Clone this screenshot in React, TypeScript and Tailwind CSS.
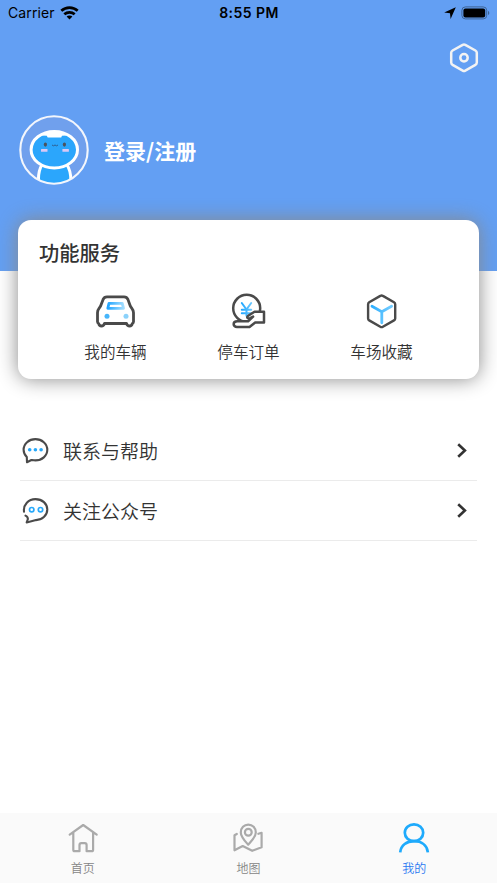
import React from 'react';

interface ServiceItem {
  label: string;
  icon: React.ReactNode;
}

const HexagonSettingIcon = () => (
  <svg width="30" height="32" viewBox="0 0 30 32" fill="none" stroke="#f3f3f3">
    <path d="M13.7 2.8 3.600 8.500Q2.200 9.300 2.200 10.800v9.800q0 1.500 1.400 2.300l10.100 5.700q1.300.7 2.600 0l10.100-5.700q1.400-.8 1.400-2.300v-9.800q0-1.500-1.400-2.300L16.300 2.800q-1.300-.7-2.600 0Z" strokeWidth="2.500" />
    <circle cx="15" cy="15.700" r="3.700" strokeWidth="2.500" />
  </svg>
);

const Avatar = () => (
  <svg width="70" height="70" viewBox="0 0 70 70" fill="none">
    <clipPath id="avatar-clip">
      <circle cx="35" cy="35" r="34" />
    </clipPath>
    <circle cx="35" cy="35" r="33.7" fill="#70a0ed" />
    <g clipPath="url(#avatar-clip)">
      <path d="M20.2 74c-1.800-12 .3-20.500 3-24.500h24.500c3.500 5 5 14 3.500 24.500Z" fill="#2ba6fc" stroke="#fff" strokeWidth="3" />
      <ellipse cx="35.300" cy="34.700" rx="23.200" ry="18.300" fill="#2ba6fc" stroke="#fff" strokeWidth="3" />
      <path d="M22.500 20.500 28 16.500h14.500l5.500 4-5 .2-.8 1.700H28.700l-.9-1.700Z" fill="#fff" />
    </g>
    <ellipse cx="26.400" cy="29.600" rx="1.600" ry="2.100" fill="#4c535e" />
    <ellipse cx="45.400" cy="29.600" rx="1.600" ry="2.100" fill="#4c535e" />
    <path d="M33 30q1.500 1.600 3 0 1.500 1.600 3 0" stroke="#2f5f90" strokeWidth="1" />
    <rect x="22" y="34" width="6.500" height="2.700" rx=".5" fill="#d9c8f5" />
    <rect x="43.400" y="34" width="6.500" height="2.700" rx=".5" fill="#d9c8f5" />
    <circle cx="35" cy="35" r="33.700" stroke="#f3f6fc" strokeWidth="2.100" />
  </svg>
);

const CarIcon = () => (
  <svg width="40" height="40" viewBox="1.500 0 40 40" fill="none">
    <defs>
      <linearGradient id="car-window" x1="0" x2="1">
        <stop stopColor="#22a5ff" />
        <stop offset="1" stopColor="#a2ddff" />
      </linearGradient>
    </defs>
    <path
      d="M12.500 5.900h17c2 0 3.200.8 3.900 2.500l2.300 6.400c.3.900.8 1.400 1.500 2.300 1.200 1.500 1.800 2.800 1.800 4.600v9.100c0 1-.6 1.500-1.300 1.900-.2 1.300-1.300 2.300-2.700 2.300-1.500 0-2.500-.9-3-2.500H10c-.5 1.600-1.500 2.500-3 2.500-1.400 0-2.500-1-2.700-2.300-.8-.4-1.300-.9-1.300-1.900v-9.100c0-1.800.5-3.100 1.700-4.600.7-.9 1.200-1.400 1.500-2.300l2.400-6.400c.7-1.700 1.900-2.500 3.900-2.500Z"
      stroke="#4a4a4a"
      strokeWidth="2.800"
      strokeLinejoin="round"
    />
    <path d="M14.500 12.300h13.300l1.200 5H13.300Z" stroke="url(#car-window)" strokeWidth="2.800" strokeLinejoin="round" />
    <circle cx="12.500" cy="25.200" r="2.500" fill="#46b5fb" />
    <circle cx="31.500" cy="25.200" r="2.500" fill="#8bd2fb" />
  </svg>
);

const PayIcon = () => (
  <svg width="40" height="40" viewBox="1 0 40 40" fill="none" strokeLinecap="round" strokeLinejoin="round">
    <defs>
      <linearGradient id="yuan" gradientUnits="userSpaceOnUse" x1="13" x2="24" y1="0" y2="0">
        <stop stopColor="#1ca5ff" />
        <stop offset="1" stopColor="#70c9ff" />
      </linearGradient>
    </defs>
    <circle cx="18.700" cy="17.300" r="13.500" stroke="#4a4a4a" strokeWidth="2.500" />
    <path d="m13.800 12 4.700 6.500 4.700-6.500M13.800 18.800h9.400M13.800 22.300h9.400M18.500 18.500v6.200" stroke="url(#yuan)" strokeWidth="2" />
    <path
      d="M36 20.800H26.500l-6.300 4c-1 .7-1.300 1.700-.5 2.300.6.500 1.500.4 2.400 0l3-1.500-5 4.700H9.300c-4.900 0-4.700 5.600-.3 5.600h12.500l5.700-4.400H36Z"
      fill="#fff"
      stroke="#4a4a4a"
      strokeWidth="2.500"
    />
  </svg>
);

const CubeIcon = () => (
  <svg width="40" height="40" viewBox="0 0 40 40" fill="none">
    <defs>
      <linearGradient id="cube-line" gradientUnits="userSpaceOnUse" x1="10" x2="30" y1="15" y2="20">
        <stop stopColor="#2caeff" />
        <stop offset="1" stopColor="#77ceff" />
      </linearGradient>
    </defs>
    <path d="M18.300 4.900 7.200 11.200q-1.100.7-1.100 2v14.200q0 1.300 1.100 2l11.100 6.300q1.300.8 2.600 0L32 29.400q1.200-.7 1.200-2V13.200q0-1.300-1.200-2L20.900 4.900q-1.300-.8-2.600 0Z" stroke="#4a4a4a" strokeWidth="2.400" />
    <path d="m10 15.300 9.800 5.400 9.800-5.400M19.800 20.700v11.100" stroke="url(#cube-line)" strokeWidth="2.800" strokeLinecap="round" strokeLinejoin="round" />
  </svg>
);

const HelpIcon = () => (
  <svg width="28" height="28" viewBox="0.500 0.200 28 28" fill="none">
    <path d="M5.300 20.300C3.200 18.200 2.100 15.700 2.100 13 2.100 6.900 7.400 2.300 13.900 2.300S25.800 6.900 25.800 13 20.500 23.600 13.900 23.600c-1.400 0-2.600-.2-4-.4L5.500 25.400Z" stroke="#4a4a4a" strokeWidth="2.100" strokeLinejoin="round" />
    <circle cx="8.200" cy="12.900" r="1.800" fill="#28a9fa" />
    <circle cx="13.900" cy="12.900" r="1.800" fill="#28a9fa" />
    <circle cx="19.600" cy="12.900" r="1.800" fill="#28a9fa" />
  </svg>
);

const FollowIcon = () => (
  <svg width="28" height="28" viewBox="0.500 0.200 28 28" fill="none">
    <path d="M2.500 14.800C1.700 7.800 7 2.300 13.900 2.300S25.800 6.900 25.800 12.800 20.500 23.300 14.500 23.300L5.200 25.600l1.200-3.400c0-1.600-1.300-2.900-2.400-3.400" stroke="#4a4a4a" strokeWidth="2.100" strokeLinecap="round" strokeLinejoin="round" />
    <circle cx="10.200" cy="12.900" r="2.200" stroke="#28a9fa" strokeWidth="1.700" />
    <circle cx="19" cy="12.900" r="2.200" stroke="#28a9fa" strokeWidth="1.700" />
  </svg>
);

const ArrowIcon = () => (
  <svg width="12" height="16" viewBox="0 0.500 12 16" fill="none">
    <path d="m2.200 1.700 6.700 6.300-6.700 6.300" stroke="#333" strokeWidth="2.600" />
  </svg>
);

const HomeIcon = () => (
  <svg width="32" height="32" viewBox="0 0.300 32 32" fill="none" stroke="#aaa" strokeWidth="2.200" strokeLinecap="round" strokeLinejoin="round">
    <path d="M2.700 13 16.200 3.300 29.700 13M6.300 11v17q0 1.500 1.500 1.500h4.700v-6.300q0-1.800 1.800-1.800h3.500q1.800 0 1.800 1.800v6.300h5q1.500 0 1.500-1.500V11" />
  </svg>
);

const MapIcon = () => (
  <svg width="32" height="32" viewBox="0 0.500 32 32" fill="none" stroke="#aaa" strokeWidth="2.200" strokeLinecap="round" strokeLinejoin="round">
    <path d="M4.800 12.500 2.500 13.800v15l8.200-4.300 9.500 4.800 9.400-3.600V11.300l-3.200 1" />
    <path d="M16.200 23.200c-3.400-3.900-7.400-8-7.400-12.300 0-4.400 3.300-7.800 7.500-7.800s7.500 3.400 7.500 7.800c0 4.300-4.200 8.400-7.600 12.300Z" />
    <circle cx="16.300" cy="10.700" r="3.400" />
  </svg>
);

const MineIcon = () => (
  <svg width="32" height="32" viewBox="0 0.700 32 32" fill="none" stroke="#1eaafc" strokeWidth="2.700">
    <ellipse cx="16" cy="11.500" rx="9.200" ry="8.400" />
    <path d="M2.200 31C3 23.700 8.800 19.900 16 19.900S29 23.700 29.900 31" />
  </svg>
);

const StatusBar = () => (
  <div className="grid h-6 grid-cols-3 items-center pl-2 pr-[7px] pt-px font-['Inter','Liberation_Sans',sans-serif] text-[14px] text-black">
    <div className="flex items-center gap-[5px]">
      <span className="tracking-[0.12px]">Carrier</span>
      <svg width="19" height="14" viewBox="0 0 19 14" fill="none" stroke="#000" strokeWidth="2.700">
        <path d="M1.300 4.700c4.600-4.200 11.800-4.200 16.400 0M4.300 8.300c3-2.700 7.400-2.700 10.400 0" />
        <path d="m9.500 13.500-2.900-2.900c1.600-1.400 4.200-1.400 5.800 0Z" fill="#000" stroke="none" />
      </svg>
    </div>
    <span className="text-center font-semibold tracking-[0.45px]">8:55 PM</span>
    <div className="flex items-center justify-end gap-[5px]">
      <svg width="12" height="12" viewBox="0 0 12 12">
        <path d="M11.800.3 6.600 12 6 6.300.2 5.600Z" />
      </svg>
      <svg width="29" height="14" viewBox="0 0 29 14" fill="none">
        <rect x=".9" y=".9" width="24.800" height="12" rx="3.500" stroke="#3e6495" />
        <rect x="2.400" y="2.400" width="21.800" height="9" rx="2" fill="#000" />
        <path d="M27 4.700c1.800.7 1.800 3.700 0 4.400Z" fill="#3e6495" />
      </svg>
    </div>
  </div>
);

const services: ServiceItem[] = [
  { label: '我的车辆', icon: <CarIcon /> },
  { label: '停车订单', icon: <PayIcon /> },
  { label: '车场收藏', icon: <CubeIcon /> }
];

const menus: ServiceItem[] = [
  { label: '联系与帮助', icon: <HelpIcon /> },
  { label: '关注公众号', icon: <FollowIcon /> }
];

const tabs = [
  { label: '首页', icon: <HomeIcon />, active: false },
  { label: '地图', icon: <MapIcon />, active: false },
  { label: '我的', icon: <MineIcon />, active: true }
];

export default function App() {
  return (
    <div className="flex h-[883px] w-[497px] flex-col overflow-hidden bg-white font-['Noto_Sans_CJK_SC',sans-serif] text-[#333]">
      <header className="h-[271px] shrink-0 bg-[#639ff3]">
        <StatusBar />
        <div className="flex h-[65px] justify-end pr-[18px] pt-[18px]">
          <HexagonSettingIcon />
        </div>
        <div className="flex h-[122px] items-center gap-[15px] pl-[19px]">
          <Avatar />
          <span className="text-[21px] font-bold leading-[30px] text-white">登录/注册</span>
        </div>
      </header>

      {/* 功能服务 */}
      <section className="z-10 mx-[18px] -mt-[51px] h-[159px] shrink-0 rounded-[13px] bg-white shadow-[0_0_20px_#888]">
        <h2 className="px-[21px] pt-[17px] text-[20.3px] font-medium leading-[30px]">功能服务</h2>
        <div className="grid grid-cols-3 px-[31px] pt-6">
          {services.map((item) => (
            <div key={item.label} className="flex flex-col items-center">
              {item.icon}
              <span className="mt-2 text-[15.6px] font-[350] leading-6">{item.label}</span>
            </div>
          ))}
        </div>
      </section>

      <main className="flex-1 px-5 pt-[42px]">
        {menus.map((item) => (
          <div key={item.label} className="flex h-[60px] items-center border-b border-[#ebebeb] pl-[2px] pr-[9px]">
            {item.icon}
            <span className="ml-[13px] flex-1 text-[19px] font-[350] leading-7">{item.label}</span>
            <ArrowIcon />
          </div>
        ))}
      </main>

      {/* 底部导航 */}
      <nav className="grid h-[70px] shrink-0 grid-cols-3 bg-[#fafafa]">
        {tabs.map((tab) => (
          <div
            key={tab.label}
            className={`flex flex-col items-center pt-[9px] text-[12px] leading-[18px] ${
              tab.active ? 'text-[#2979f2]' : 'text-[#858585]'
            }`}
          >
            {tab.icon}
            <span className="mt-[5px] font-[350]">{tab.label}</span>
          </div>
        ))}
      </nav>
    </div>
  );
}
